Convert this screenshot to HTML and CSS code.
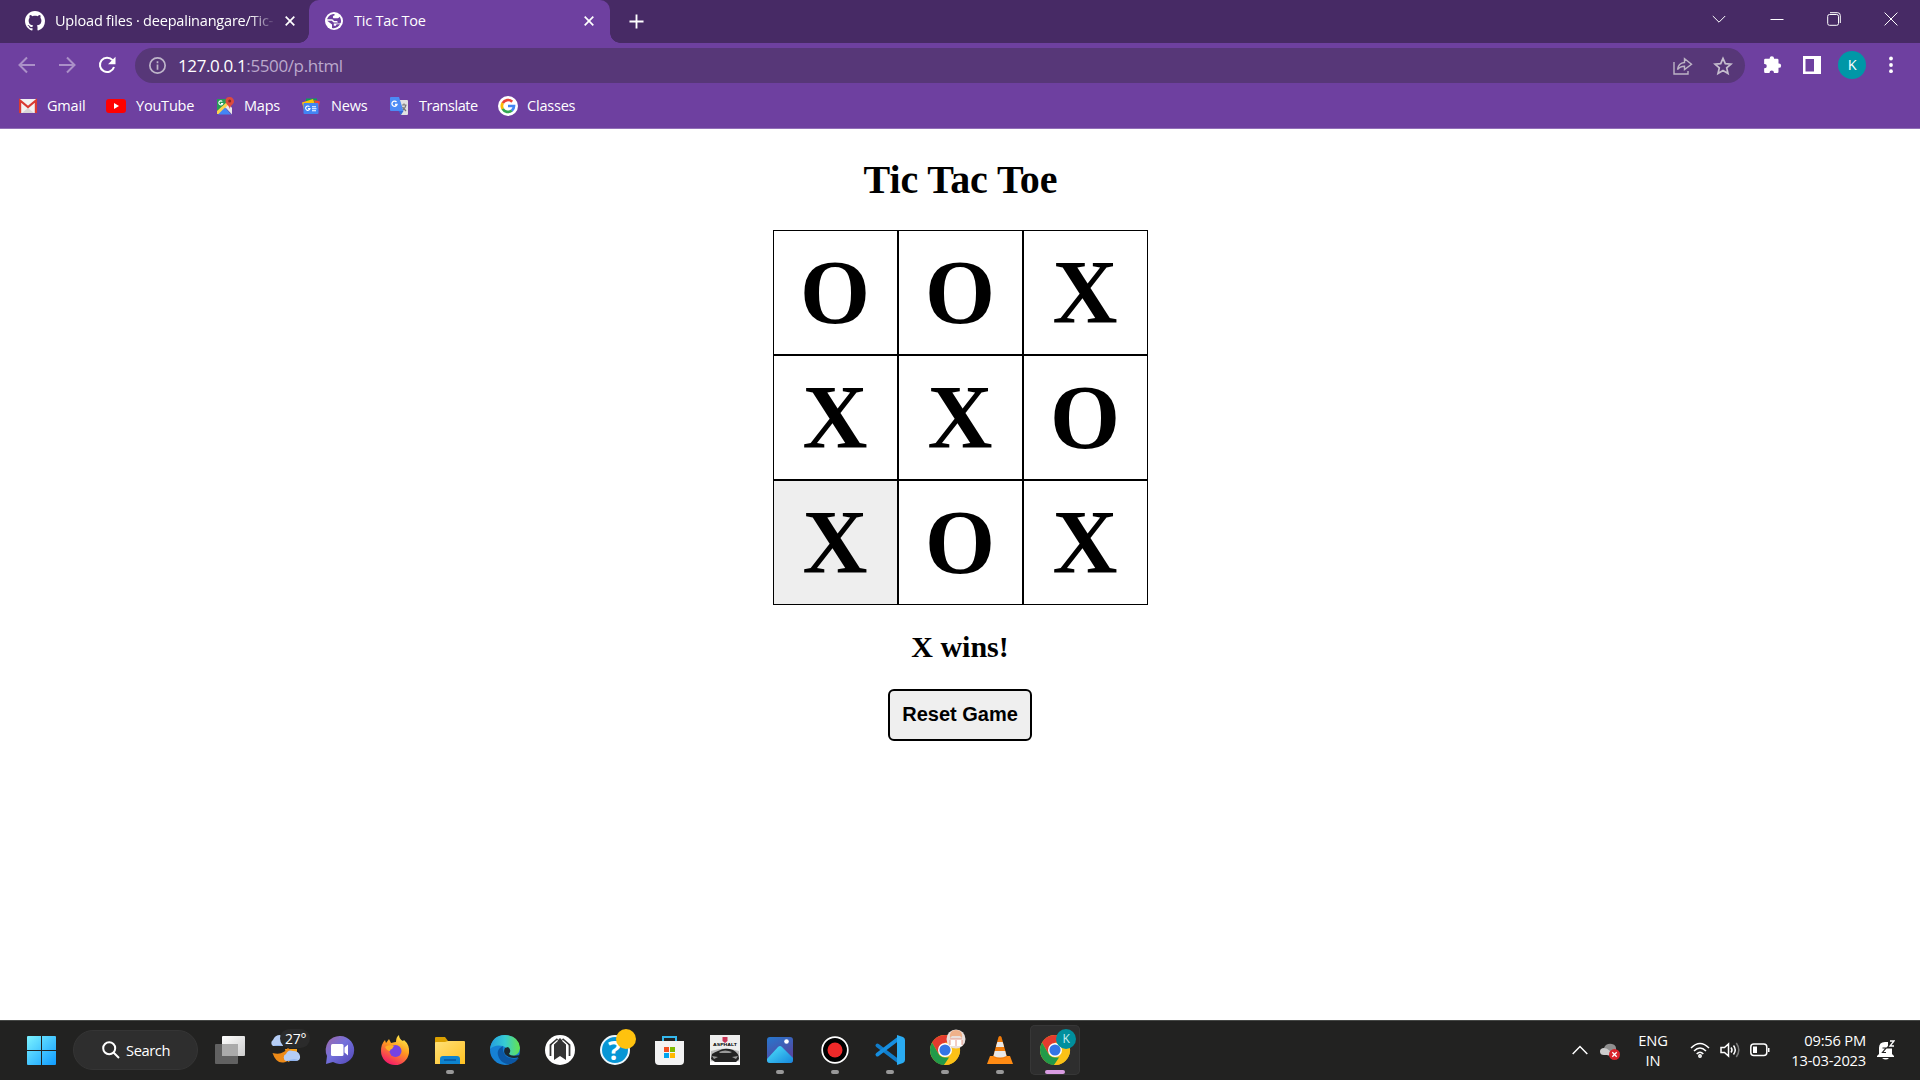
FILE: index.html
```html
<!DOCTYPE html>
<html lang="en">
<head>
<meta charset="utf-8">
<title>Tic Tac Toe</title>
<link rel="stylesheet" href="styles.css">
</head>
<body>
<header class="browser">
  <div class="tabstrip">
    <div class="tab tab-back">
      <svg class="i20" viewBox="0 0 16 16"><path fill="#fff" d="M8 0C3.58 0 0 3.58 0 8c0 3.54 2.29 6.53 5.47 7.59.4.07.55-.17.55-.38 0-.19-.01-.82-.01-1.49-2.01.37-2.53-.49-2.69-.94-.09-.23-.48-.94-.82-1.13-.28-.15-.68-.52-.01-.53.63-.01 1.08.58 1.23.82.72 1.21 1.87.87 2.33.66.07-.52.28-.87.51-1.07-1.78-.2-3.64-.89-3.64-3.95 0-.87.31-1.59.82-2.15-.08-.2-.36-1.02.08-2.12 0 0 .67-.21 2.2.82.64-.18 1.32-.27 2-.27s1.36.09 2 .27c1.53-1.04 2.2-.82 2.2-.82.44 1.1.16 1.92.08 2.12.51.56.82 1.27.82 2.15 0 3.07-1.87 3.75-3.65 3.95.29.25.54.73.54 1.48 0 1.07-.01 1.93-.01 2.2 0 .21.15.46.55.38A8.01 8.01 0 0 0 16 8c0-4.42-3.58-8-8-8z"/></svg>
      <span class="tab-title fade">Upload files · deepalinangare/Tic-</span>
      <svg class="tab-close" viewBox="0 0 10 10"><path d="M.7.7l8.6 8.6M9.300.7L.7 9.300"/></svg>
    </div>
    <div class="tab tab-active">
      <svg class="i18" viewBox="0 0 18 18"><circle cx="9" cy="9" r="9" fill="#fff"/><path fill="#6e40a0" d="M9.500 1.900C6 1.800 3 4 2.100 7.200h4.600c1.300 0 2 .7 2 1.900h2.600c1 0 1.500.6 1.500 1.500h-3c-1.400 0-2.400-.6-2.700-1.800H2.200L7 12.500v3.400c3.500 1 6.500-.8 8-3.600h-2.800c-.8 0-1.200.5-1.200 1.500H8.800v-2.300h5.400c1 0 1.600-.5 1.800-1.500.2-2-.3-3.700-1.400-5.200-.7 1-1.500 1.500-2.900 1.500H9.300c-.9 0-1.400-.5-1.400-1.400 0-1 .6-1.500 1.600-1.500z"/></svg>
      <span class="tab-title">Tic Tac Toe</span>
      <svg class="tab-close" viewBox="0 0 10 10"><path d="M.7.7l8.6 8.6M9.300.7L.7 9.300"/></svg>
    </div>
    <svg class="new-tab" viewBox="0 0 16 16"><path d="M8 .5v15M.5 8h15"/></svg>
    <div class="window-controls">
      <svg viewBox="0 0 14 14"><path d="M.8 4L7 10.200 13.200 4"/></svg>
      <svg viewBox="0 0 14 14"><path d="M.5 7.500h13"/></svg>
      <svg viewBox="0 0 14 14"><rect x=".7" y="2.500" width="10.800" height="10.800" rx="1.800"/><path d="M3 .7h7.500q2.800 0 2.800 2.800V11"/></svg>
      <svg viewBox="0 0 14 14"><path d="M.6.6l12.800 12.800M13.400.6L.6 13.400"/></svg>
    </div>
  </div>
  <div class="toolbar">
    <svg class="nav dim" viewBox="0 0 18 18"><path d="M17 9H2M9 1.500L1.500 9 9 16.500"/></svg>
    <svg class="nav dim" viewBox="0 0 18 18"><path d="M1 9h15M9 1.500L16.500 9 9 16.500"/></svg>
    <svg class="nav" viewBox="0 0 18 18"><path d="M14.600 4.200A7.200 7.200 0 1 0 16 11"/><path fill="#fff" stroke="none" d="M17.500.8v7.400H10z"/></svg>
    <div class="omnibox">
      <svg class="info" viewBox="0 0 16 16"><circle cx="8" cy="8" r="7.200"/><path d="M8 7v5M8 4v1.800"/></svg>
      <span class="url">127.0.0.1<span class="path">:5500/p.html</span></span>
      <svg class="share" viewBox="0 0 20 18"><path d="M1 5v12h14v-3M4.500 12.500c.6-4.600 3.200-6.700 7-7V1.800L18.500 7.300 11.500 12.500V9.200c-3 0-5.200.8-7 3.300z"/></svg>
      <svg class="star" viewBox="0 0 20 20"><path d="M10 2.300l2.300 5.300 5.700.5-4.300 3.800 1.300 5.600-5-3-5 3 1.300-5.600L2 8.100l5.700-.5z"/></svg>
    </div>
    <svg class="ext" viewBox="0 0 20 20"><path fill="#fff" d="M2.500 4H7V3.500a2.300 2.300 0 0 1 4.600 0V4H15a1.300 1.300 0 0 1 1.300 1.300v3.600h.5a2.300 2.300 0 0 1 0 4.600h-.5v4.200A1.300 1.300 0 0 1 15 19h-3.500v-.5a2.300 2.300 0 0 0-4.600 0v.5H2.500a1.300 1.300 0 0 1-1.300-1.300V14h.5a2.300 2.300 0 0 0 0-4.600h-.5V5.300A1.300 1.300 0 0 1 2.500 4z"/></svg>
    <svg class="panel" viewBox="0 0 18 18"><path fill="#fff" fill-rule="evenodd" d="M0 0h18v18H0zM2.500 3v12.500H11V3z"/></svg>
    <span class="avatar">K</span>
    <svg class="dots" viewBox="0 0 4 18"><g fill="#fff"><circle cx="2" cy="2.500" r="1.900"/><circle cx="2" cy="9" r="1.900"/><circle cx="2" cy="15.200" r="1.900"/></g></svg>
  </div>
  <nav class="bookmarks">
    <span class="bm bm-gmail"><svg viewBox="0 0 18 18"><path fill="#f2f2f2" d="M0 2h18v14H0z"/><path fill="#d9d6d6" d="M3 16l6-5 6 5z"/><path fill="none" stroke="#d93a32" stroke-width="2.200" d="M1.100 16V3.500L9 10l7.900-6.500V16"/></svg>Gmail</span>
    <span class="bm bm-yt"><svg viewBox="0 0 20 14"><rect width="20" height="14" rx="3" fill="#f00"/><path fill="#fff" d="M8 4l5 3-5 3z"/></svg>YouTube</span>
    <span class="bm bm-maps"><svg viewBox="0 0 18 18"><path fill="#269b57" d="M1 2h14v3L4 15H1z"/><path fill="#ffd34c" d="M1 14L12 4l2 3L4 17H1z"/><path fill="#4386f5" d="M2 17.500L9 10.500l6 7z"/><path fill="#e8e8e8" d="M9.500 10.500L13 7l3 4v6.500z"/><path fill="none" stroke="#fff" stroke-width="1.100" d="M6.300 4.500a2 2 0 1 0 .4 2H5"/><path fill="#dd4b3e" d="M13.500 0A4.300 4.300 0 0 1 18 4.300c0 3-3.500 3.500-4.200 7.700C13 8 9.500 7.200 9.500 4.300A4.200 4.200 0 0 1 13.500 0z"/><circle cx="13.700" cy="4" r="1.500" fill="#842c25"/></svg>Maps</span>
    <span class="bm bm-news"><svg viewBox="0 0 18 16"><path fill="#0c9d58" d="M4 .5h11v5H4z"/><path fill="#f44336" d="M12 2l6 1.500-2.500 10z"/><path fill="#ffc107" d="M0 4.500L11 1l3 8-12 3z"/><rect x="1.500" y="5" width="15" height="11" rx="1" fill="#4285f4"/><path fill="none" stroke="#fff" stroke-width="1.100" d="M7.500 8.700a2.200 2.200 0 1 0 .5 1.900H6M10 8.700h4M10 10.700h4.500M10 12.700h4"/></svg>News</span>
    <span class="bm bm-translate"><svg viewBox="0 0 20 20"><path fill="#e2e2e2" d="M8 4h10q1 0 1 1v13q0 1-1 1h-6z"/><path fill="#4c8bf5" d="M2 1h8l4.500 14H2q-1 0-1-1V2q0-1 1-1z"/><path fill="#3367d6" d="M9.500 15h5L12 19z"/><path fill="none" stroke="#fff" stroke-width="1.300" d="M7.500 6A2.600 2.600 0 1 0 8 8.500H6"/><path fill="none" stroke="#777" stroke-width="1.200" d="M13 9h4.500M15 7.500V9M17 9q-1 3.500-3 5M13.500 11l3.500 4"/></svg>Translate</span>
    <span class="bm bm-classes"><svg viewBox="0 0 20 20"><circle cx="10" cy="10" r="10" fill="#fff"/><g fill="none" stroke-width="2.700"><path stroke="#ea4335" d="M4.700 7.200A6 6 0 0 1 14.200 5.700"/><path stroke="#fbbc05" d="M4.700 7a6 6 0 0 0 0 6"/><path stroke="#34a853" d="M4.700 12.800a6 6 0 0 0 9.200 1.700"/><path stroke="#4285f4" d="M13.800 14.600A6 6 0 0 0 16 10H10"/></g></svg>Classes</span>
  </nav>
</header>

<main class="page">
  <h1>Tic Tac Toe</h1>
  <div class="board">
    <div class="cell">O</div><div class="cell">O</div><div class="cell">X</div>
    <div class="cell">X</div><div class="cell">X</div><div class="cell">O</div>
    <div class="cell hovered">X</div><div class="cell">O</div><div class="cell">X</div>
  </div>
  <h2>X wins!</h2>
  <button class="reset">Reset Game</button>
</main>

<footer class="taskbar">
  <svg class="start" viewBox="0 0 29 29"><defs><linearGradient id="win" x1="0" y1="0" x2="1" y2="1" gradientUnits="objectBoundingBox"><stop stop-color="#7cf3ff"/><stop offset="1" stop-color="#0f9bff"/></linearGradient></defs><path fill="url(#win)" d="M1 0h13v14H0V1q0-1 1-1zM15 0h13q1 0 1 1v13H15zM0 15h14v14H1q-1 0-1-1zM15 15h14v13q0 1-1 1H15z"/></svg>
  <div class="search"><svg viewBox="0 0 18 18"><circle cx="7.200" cy="7.200" r="6"/><path d="M11.500 11.500l5.500 5.500"/></svg>Search</div>
  <div class="apps">
    <div class="app"><svg viewBox="0 0 30 30"><defs><linearGradient id="tv" x2="1" y2="1"><stop stop-color="#fff"/><stop offset="1" stop-color="#ccc"/></linearGradient></defs><rect x="7" y="1" width="23" height="20" rx="1" fill="url(#tv)"/><rect y="9" width="23" height="20" rx="1" fill="#777" opacity=".75"/><path fill="#aaa" d="M7 9h16v12H7z"/></svg></div>
    <div class="app"><svg viewBox="0 0 30 30"><path fill="#f9a11b" d="M15 14h12v9l-9 4z"/><path fill="#ed8a18" d="M2.500 18q7 2 11-1 4-2 4-4 4 1 4 5 0 7-6 9-9 3-13-9z"/><path fill="#b5cdf5" d="M3 11a3.500 3.500 0 0 1 0-6q2-5 7-5 4 1 3 11zM16 26a3.800 3.800 0 0 1 0-7q2-5 7-3 6 0 7 5 1 5-5 5z"/><path fill="#8db1ec" d="M3 11q5-2 10 0zM16 26q8-3 12-1-2 1-4 1z"/></svg><span class="temp">27°</span></div>
    <div class="app"><svg viewBox="0 0 30 30"><defs><linearGradient id="chat" x2="1" y2="1"><stop stop-color="#a067a5"/><stop offset=".45" stop-color="#7471dc"/><stop offset="1" stop-color="#5145b5"/></linearGradient></defs><path fill="url(#chat)" d="M15 1A14 14 0 1 1 8 27L1 29l1-8A14 14 0 0 1 15 1z"/><rect x="6" y="9" width="12.500" height="12" rx="1.500" fill="#fff"/><path fill="#fff" d="M19.500 12.500L23 9.500v11l-3.500-3z"/></svg></div>
    <div class="app"><svg viewBox="0 0 30 30"><defs><linearGradient id="ff" x1=".8" y1="0" x2=".3" y2="1"><stop stop-color="#fff44f"/><stop offset=".45" stop-color="#ff9a1f"/><stop offset="1" stop-color="#f5156c"/></linearGradient></defs><path fill="url(#ff)" d="M19 0q0 4 4 6l1-1q6 5 5 13A14 14 0 0 1 15 30 14 14 0 0 1 1 16Q1 9 5 5l1 3 3-4 2 4q4-1 5-1 0-5 3-7z"/><circle cx="15.500" cy="16" r="6" fill="#7542e4"/><path fill="#ffad26" d="M5 12q3-3 9-1l-2 3q-2 0-2 2-3 0-5-4z"/></svg></div>
    <div class="app running"><svg viewBox="0 0 30 30"><defs><linearGradient id="fold" x2="1" y2="1"><stop stop-color="#ffe078"/><stop offset="1" stop-color="#ffc121"/></linearGradient></defs><path fill="#dba000" d="M0 3q0-1 1-1h9l3 4v4H0z"/><path fill="url(#fold)" d="M0 8q0-1 1-1h9l3-1h16q1 0 1 1v22H0z"/><path fill="#0d83cf" d="M5 29v-5q0-3 3-3h14q3 0 3 3v5z"/><path stroke="#06539c" stroke-width="1.500" d="M9 25h12"/></svg></div>
    <div class="app"><svg viewBox="0 0 30 30"><defs><linearGradient id="edge" x1="0" x2="1"><stop stop-color="#249edf"/><stop offset=".5" stop-color="#36cbd4"/><stop offset="1" stop-color="#66e34b"/></linearGradient></defs><circle cx="15" cy="15" r="15" fill="#1681d4"/><path fill="url(#edge)" d="M0 14Q2 0 15 0q14 1 15 13-1 8-9 8-4 0-3-4 0-4-5-6Q5 9 0 14z"/><path fill="#0c57a4" d="M13 11q-8 4-4 12 4 7 12 6 5-2 8-6-8 2-13-2-4-4-3-10z"/><path fill="#1c2830" d="M18 12q4 3 1 7 2 3 11 1l-1 2q-5 2-10 0-7-3-4-9z"/></svg></div>
    <div class="app"><svg viewBox="0 0 30 30"><circle cx="15" cy="15" r="15" fill="#fff"/><path fill="#333" d="M9 9l6-6 6 6v16l-6-4-6 4z"/><path fill="none" stroke="#333" stroke-width="1.800" d="M5.500 21V10l7-6M24.500 21V10l-7-6"/><path fill="none" stroke="#fff" stroke-width="1.200" d="M7.500 22V10l5-4.500M22.500 22V10l-5-4.500"/></svg></div>
    <div class="app"><svg viewBox="0 0 30 30"><circle cx="15" cy="15" r="14" fill="#0796d5" stroke="#edf7fc" stroke-width="2"/></svg><span class="question">?</span><i class="badge yellow"></i></div>
    <div class="app"><svg viewBox="0 0 30 30"><path fill="none" stroke="#34b8ed" stroke-width="2" d="M8 8V2h13v6"/><path fill="#f3f3f3" d="M0 6h29v20q0 4-4 4H4q-4 0-4-4z"/><path fill="#f25022" d="M9 12h5v5H9z"/><path fill="#7fba00" d="M15 12h5v5h-5z"/><path fill="#00a4ef" d="M9 18h5v5H9z"/><path fill="#ffb900" d="M15 18h5v5h-5z"/></svg></div>
    <div class="app"><svg viewBox="0 0 30 30"><path fill="#eee" d="M0 0h30v30H0z"/><path fill="#c93656" d="M12.500 2h5v4l-2.500 2-2.500-2z"/><path fill="#bbb" d="M1 16q14-5 28 0v10H1z"/><path fill="#242424" d="M2 19q3-2 6-3 7-4 15-1 6 3 6 9l-3 3H5l-4-3z"/><path fill="#999" d="M9 17q6-3 13 0l-2 1H10zM2 21l6 1-4 2zM22 22l6-1-2 3z"/><path fill="#fff" d="M0 27h30v3H0z"/><text class="asphalt" x="3" y="11.300" textLength="24" lengthAdjust="spacingAndGlyphs">ASPHALT</text></svg></div>
    <div class="app running"><svg viewBox="0 0 30 30"><defs><linearGradient id="photo" x2=".5" y2="1"><stop stop-color="#2678cf"/><stop offset="1" stop-color="#59429c"/></linearGradient><linearGradient id="hill" x2="1" y2="1"><stop stop-color="#50e3fc"/><stop offset="1" stop-color="#1687dc"/></linearGradient></defs><rect x="2" y="2" width="26" height="26" rx="3" fill="url(#photo)"/><path fill="url(#hill)" d="M2 24l11-12q2-2 4 0l11 11v2q0 3-3 3H5q-3 0-3-3z"/><circle cx="21.500" cy="6.500" r="2.300" fill="#fff"/></svg></div>
    <div class="app running"><svg viewBox="0 0 30 30"><circle cx="15" cy="15" r="12.800" fill="#000" stroke="#fff" stroke-width="1.700"/><circle cx="15" cy="15" r="7.500" fill="#ef2929"/></svg></div>
    <div class="app running"><svg viewBox="0 0 30 30"><path fill="none" stroke="#117dca" stroke-width="4" stroke-linecap="round" d="M2.500 10.500L23 26"/><path fill="none" stroke="#168ee0" stroke-width="4" stroke-linecap="round" d="M2.500 19.500L23 4"/><path fill="#2aabf2" d="M22 0l6 2q2 1 2 3v20q0 2-2 3l-6 2z"/></svg></div>
    <div class="app running"><svg viewBox="0 0 30 30"><use href="#chrome"/></svg><i class="badge photo"><svg viewBox="0 0 20 20"><circle cx="10" cy="10" r="9.500" fill="#e9dfdc"/><path fill="#efb18a" d="M4 9Q3 1 10 1t6 8l-2-2H6z"/><path fill="#fff" d="M4 10h12v7H4z"/><path stroke="#df8370" stroke-width=".8" fill="none" d="M4 11v5M10 11v6M16 11v5M4 10h12"/></svg></i></div>
    <div class="app running"><svg viewBox="0 0 30 30"><path fill="#ff8b13" d="M5 21h20l3 8H2z"/><path fill="#f27c0a" d="M13.500 2q1.500-2 3 0L22 22q-7 4-14 0z"/><path fill="#e9e9e9" d="M12.300 7h5.400l1.400 5h-8.200zM9.800 16h10.400l1.300 5Q15 24 8.500 21z"/></svg></div>
    <div class="app running current"><svg viewBox="0 0 30 30"><g id="chrome"><circle cx="15" cy="15" r="15" fill="#fbc117"/><path fill="#e33b2e" d="M2 7.500A15 15 0 0 1 28 7.500H15L8.500 18.700z"/><path fill="#229a49" d="M2 7.500L8.500 18.700A7.500 7.500 0 0 0 15 22.500h6.500L14 30A15 15 0 0 1 2 7.500z"/><path fill="#fbc117" d="M28 7.500A15 15 0 0 1 14 30l7.500-11.200Q24 13 18 7.500z"/><circle cx="15" cy="15" r="7" fill="#fff"/><circle cx="15" cy="15" r="5.600" fill="#3475e4"/></g></svg><i class="badge teal">K</i></div>
  </div>
  <div class="tray">
    <svg class="chev" viewBox="0 0 16 10"><path d="M.7 9L8 1.500 15.300 9"/></svg>
    <svg class="cloud" viewBox="0 0 20 17"><path fill="#8f8f8f" d="M4 5q2-5 8-4 5 1 4 7l-8 5z"/><path fill="#ccc" d="M4 12Q0 12 0 8.500 0 5 4 5q3 0 6 3v4z"/><circle cx="14.500" cy="11.500" r="5.500" fill="#d9242b"/><path stroke="#fff" stroke-width="1.300" d="M12.300 9.300l4.400 4.400M16.700 9.300l-4.400 4.400"/></svg>
    <div class="lang">ENG<br>IN</div>
    <svg class="wifi" viewBox="0 0 20 16"><path d="M1 6q9-9 18 0M4 9q6-6 12 0M6.700 12q3.300-3.500 6.600 0"/><circle cx="10" cy="14" r="1.200"/></svg>
    <svg class="vol" viewBox="0 0 20 16"><path d="M1 5.500h3.500L8.500 2v12l-4-3.500H1zM11 5.500q2 2.500 0 5M13.500 3.500q3.500 4.500 0 9"/><path opacity=".4" d="M16.300 1q5 7 0 14"/></svg>
    <svg class="bat" viewBox="0 0 20 14"><rect x=".8" y="1" width="16" height="11.500" rx="3"/><path class="fill" d="M3 3.500h4v6.500H3zM18 5h1.500v4H18z"/></svg>
    <div class="clock">09:56 PM<br>13-03-2023</div>
    <svg class="bell" viewBox="0 0 18 20"><path fill="#fff" d="M2 14V8Q2 2 8 2h3v4h4v8l2 2v1H0v-1zM5 18h7q-3 3-7 0z"/><path fill="none" stroke="#222" stroke-width="1.200" d="M5.500 8h3.500l-3.500 4.500H9"/><path fill="none" stroke="#222" stroke-width="3" d="M12 1h5l-5 6h5"/><path fill="none" stroke="#fff" stroke-width="1.300" d="M13 1h4l-4 5h4"/></svg>
  </div>
</footer>
</body>
</html>
```
FILE: styles.css
```css
* { box-sizing: border-box; }
body {
  margin: 0;
  width: 1920px;
  height: 1080px;
  overflow: hidden;
  display: flex;
  flex-direction: column;
  background: #fff;
  color: #000;
  font-family: "Liberation Serif", serif;
}
svg { display: block; flex: none; }

/* Browser chrome */
.browser {
  height: 129px;
  flex: none;
  background: #6e40a0;
  border-bottom: 1px solid #9170b7;
  color: #fff;
  font: 14.5px "Open Sans", sans-serif;
  letter-spacing: -0.2px;
}
.tabstrip { display: flex; height: 43px; background: #472a65; }
.tab { display: flex; align-items: center; height: 43px; }
.tab-back { width: 309px; padding: 0 14px 1px 25px; }
.tab-active {
  position: relative;
  width: 301px;
  padding: 0 16px 1px;
  background: #6e40a0;
  border-radius: 10px 10px 0 0;
}
.tab-active::before, .tab-active::after {
  content: "";
  position: absolute;
  bottom: 0;
  width: 10px;
  height: 10px;
}
.tab-active::before { left: -10px; background: radial-gradient(circle at 0 0, transparent 9.500px, #6e40a0 10px); }
.tab-active::after { right: -10px; background: radial-gradient(circle at 100% 0, transparent 9.500px, #6e40a0 10px); }
.i20 { width: 20px; height: 20px; }
.i18 { width: 18px; height: 18px; }
.tab-title { margin-left: 10px; padding-bottom: 1px; flex: 1; white-space: nowrap; overflow: hidden; }
.tab-active .tab-title { margin-left: 11px; }
.fade { mask-image: linear-gradient(90deg, #000 195px, transparent 221px); }
.tab-close { width: 10px; height: 10px; margin-left: 10px; fill: none; stroke: #fff; stroke-width: 1.7; }
.new-tab { width: 15px; height: 15px; margin: 14px 0 0 19px; fill: none; stroke: #fff; stroke-width: 2; }
.window-controls { display: flex; gap: 43px; margin: 12px 22px 0 auto; }
.window-controls svg { width: 14px; height: 14px; fill: none; stroke: #fff; stroke-width: 1; }
.window-controls svg:first-child { margin-right: 1px; }
.toolbar { display: flex; align-items: center; height: 45px; padding: 0 26px 0 18px; }
.nav { width: 18px; height: 18px; margin: 0 22px 2px 0; fill: none; stroke: #fff; stroke-width: 2; }
.dim { opacity: .42; }
.omnibox {
  display: flex;
  align-items: center;
  width: 1610px;
  height: 35px;
  margin: 0 18px 0 -3px;
  padding: 0 12px 0 14px;
  border-radius: 18px;
  background: #573778;
}
.info { width: 17px; height: 17px; fill: none; stroke: #beb5c9; stroke-width: 1.6; }
.url { margin: 0 auto 0 12px; padding-bottom: 1px; font-size: 17px; letter-spacing: -0.38px; }
.path { color: #bba9cc; }
.share { width: 20px; height: 18px; margin-right: 20px; fill: none; stroke: #bdb4c5; stroke-width: 1.4; }
.star { width: 20px; height: 20px; fill: none; stroke: #c5bdcd; stroke-width: 1.7; }
.ext { width: 19px; height: 19px; margin: 0 21px 2px 0; }
.panel { width: 18px; height: 18px; margin: 0 17px 1px 0; }
.avatar {
  width: 28px;
  height: 28px;
  margin: 0 23px 1px 0;
  border-radius: 50%;
  background: #0097a7;
  line-height: 28px;
  text-align: center;
}
.dots { width: 4px; height: 18px; margin-bottom: 1px; }
.bookmarks { display: flex; align-items: center; height: 35px; padding-left: 19px; }
.bm { display: flex; align-items: center; gap: 10px; white-space: nowrap; }
.bm svg { width: 18px; height: 18px; }
.bm-gmail { width: 87px; }
.bm-yt { width: 110px; }
.bm-maps { width: 86px; }
.bm-news { width: 87px; gap: 11px; }
.bm-translate { width: 109px; letter-spacing: -0.45px; }
.bm-classes { gap: 9px; }
.bm-yt svg, .bm-translate svg, .bm-classes svg { width: 20px; height: 20px; }

/* Game */
.page { flex: 1; display: flex; flex-direction: column; align-items: center; }
h1 { margin: 28px 0 27px; padding-left: 1px; font-size: 40px; line-height: 46px; letter-spacing: -0.1px; }
.board { display: grid; grid-template-columns: repeat(3, 125px); grid-auto-rows: 125px; }
.cell {
  display: flex;
  align-items: center;
  justify-content: center;
  border: 1px solid #000;
  font-size: 90px;
  font-weight: bold;
}
.hovered { background: #eee; }
h2 { margin: 25px 0; font-size: 30px; line-height: 34px; }
.reset {
  width: 144px;
  height: 52px;
  padding: 0 0 1px;
  border: 2px solid #000;
  border-radius: 6px;
  background: #efefef;
  color: #000;
  font: bold 20px "Liberation Sans", sans-serif;
}

/* Taskbar */
.taskbar {
  display: flex;
  align-items: center;
  height: 60px;
  flex: none;
  padding-bottom: 1px;
  border-top: 1px solid #454745;
  background: #222221;
  color: #fff;
  font: 14.7px "Open Sans", sans-serif;
  letter-spacing: -0.2px;
}
.start { width: 29px; height: 29px; margin: 0 17px 0 27px; }
.search {
  display: flex;
  align-items: center;
  width: 125px;
  height: 40px;
  margin-right: 5px;
  padding-left: 28px;
  gap: 6px;
  border: 1px solid #353535;
  border-radius: 20px;
  background: #2e2e2e;
  letter-spacing: -0.4px;
}
.search svg { width: 18px; height: 18px; fill: none; stroke: #fff; stroke-width: 2; }
.apps { display: flex; }
.app {
  position: relative;
  display: flex;
  align-items: center;
  justify-content: center;
  width: 50px;
  height: 50px;
  margin: 0 3px 0 2px;
  border-radius: 5px;
}
.app > svg { width: 30px; height: 30px; overflow: visible; }
.asphalt { font: bold 4px "Liberation Sans", sans-serif; letter-spacing: 0; }
.running::after {
  content: "";
  position: absolute;
  left: 21px;
  bottom: 1px;
  width: 8px;
  height: 4px;
  border-radius: 2px;
  background: #999;
}
.current { background: #2e2e2e; box-shadow: inset 0 0 0 1px #373737; }
.current::after { left: 15px; width: 20px; background: #d99ce2; }
.temp {
  position: absolute;
  left: 20px;
  top: 4px;
  padding: 0 4px 0 5px;
  border-radius: 10px;
  background: #2b2b2b;
  font-size: 14px;
  line-height: 19px;
}
.question { position: absolute; left: 18px; top: 8px; font: bold 27px/34px "Open Sans", sans-serif; }
.badge {
  position: absolute;
  left: 26px;
  top: 4px;
  width: 20px;
  height: 20px;
  border-radius: 50%;
  font: 12px/20px "Open Sans", sans-serif;
  text-align: center;
}
.yellow { background: #ffc20e; }
.teal { background: #008f9d; color: #c9ebee; }
.tray { display: flex; align-items: center; margin-left: auto; padding-right: 25px; }
.tray svg { fill: none; stroke: #fff; stroke-width: 1.5; }
.chev { width: 16px; height: 10px; margin-right: 12px; }
.tray .cloud { width: 20px; height: 17px; margin: 2px 18px 0 0; stroke: none; }
.lang, .clock { line-height: 20px; }
.lang { width: 30px; text-align: center; margin-right: 22px; }
.wifi { width: 20px; height: 16px; margin-right: 10px; }
.vol { width: 20px; height: 16px; margin-right: 10px; }
.bat { width: 20px; height: 14px; margin-right: 20px; }
.bat .fill { fill: #fff; stroke: none; }
.clock { width: 76px; text-align: right; white-space: nowrap; margin-right: 11px; }
.tray .bell { width: 18px; height: 20px; stroke: none; }
```
